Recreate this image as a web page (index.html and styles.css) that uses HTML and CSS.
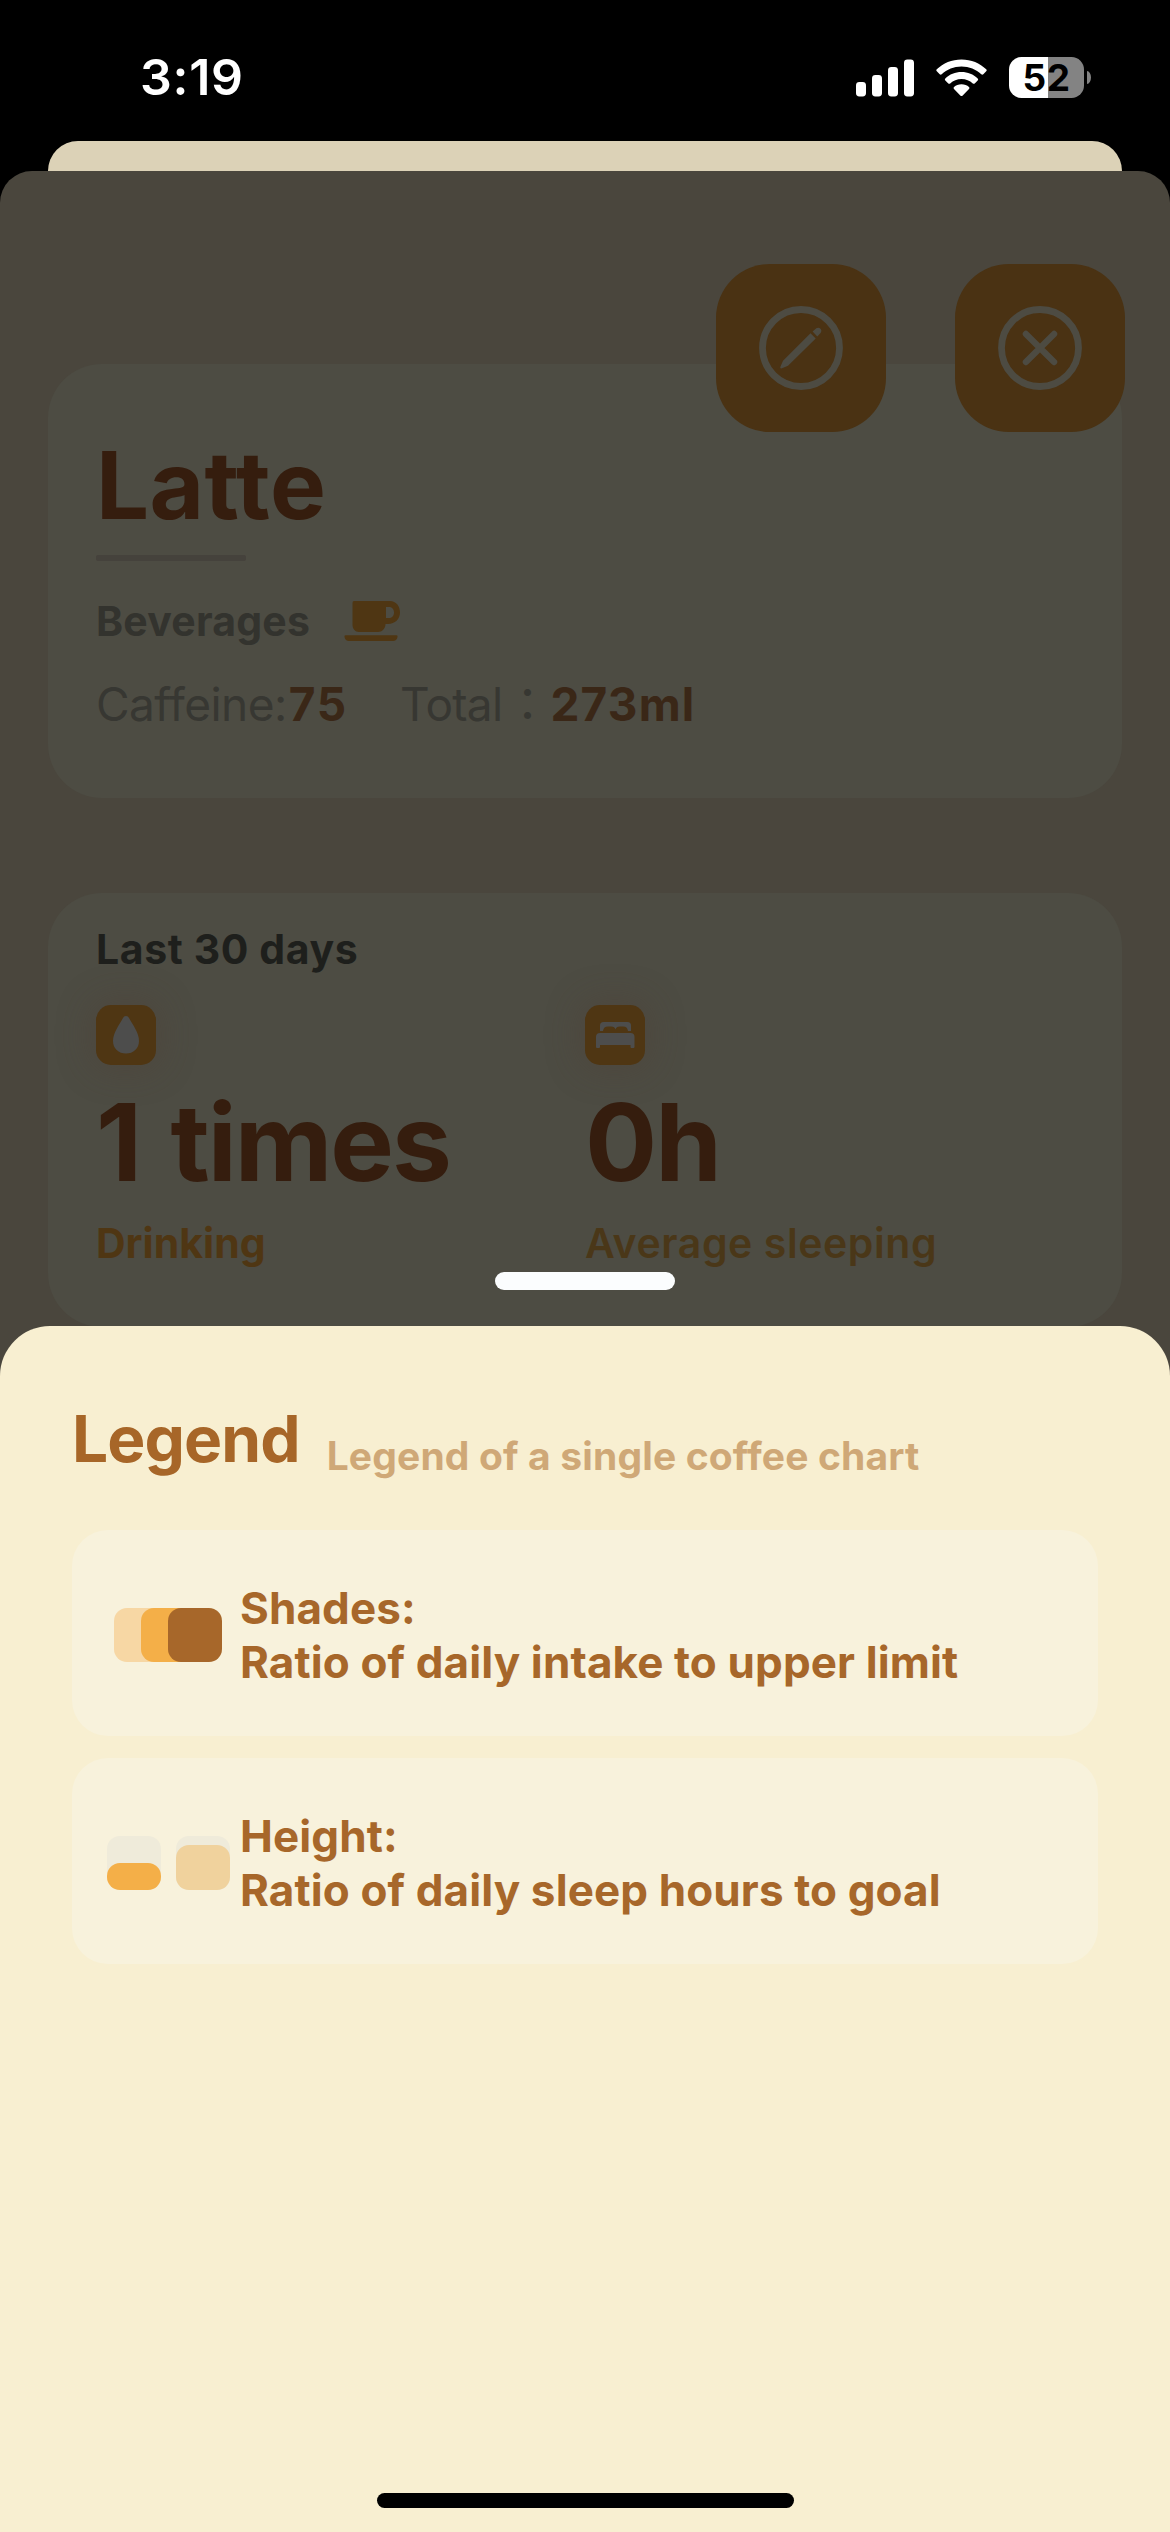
FILE: index.html
```html
<!DOCTYPE html>
<html lang="en">
<head>
  <meta charset="utf-8">
  <title>Latte – Legend</title>
  <link rel="stylesheet" href="styles.css">
</head>
<body>
  <div class="phone">
    <header class="status-bar">
      <span class="time">3:19</span>
      <div class="indicators">
        <svg class="signal" width="58" height="38" viewBox="0 0 58 38" fill="#fff">
          <rect x="0" y="23" width="10" height="14.5" rx="3.4"/>
          <rect x="16" y="16" width="10" height="21.5" rx="3.4"/>
          <rect x="32" y="8" width="10" height="29.5" rx="3.4"/>
          <rect x="48" y="0.5" width="10" height="37" rx="3.4"/>
        </svg>
        <svg class="wifi" width="51" height="38" viewBox="0 0 51 38" fill="#fff">
          <path d="M25.5 .4C35.200 .4 43.900 4.100 50.200 10.200Q51.200 11.200 50.200 12.200L47.300 15.200Q46.300 16.100 45.300 15.200C40.100 10.400 33.200 7.500 25.500 7.500S10.900 10.400 5.700 15.200Q4.700 16.100 3.700 15.200L.800 12.200Q-.2 11.200 .8 10.200C7.100 4.100 15.800 .4 25.500 .4Z"/>
          <path d="M25.500 13C31.800 13 37.400 15.400 41.700 19.400Q42.700 20.400 41.700 21.400L38.700 24.400Q37.800 25.300 36.800 24.400C33.800 21.700 29.900 20.100 25.500 20.100S17.200 21.700 14.200 24.400Q13.200 25.300 12.300 24.400L9.300 21.400Q8.300 20.400 9.300 19.400C13.600 15.400 19.200 13 25.500 13Z"/>
          <path d="M25.500 25.300C28.500 25.300 31 26.300 33 28Q34 29 33 30L26.700 36.500Q25.500 37.600 24.300 36.500L18 30Q17 29 18 28C20 26.300 22.500 25.300 25.500 25.300Z"/>
        </svg>
        <div class="battery">
          <div class="battery-body">52</div>
          <div class="battery-tip"></div>
        </div>
      </div>
    </header>

    <div class="stacked-sheet"></div>

    <main class="detail">
      <section class="card">
        <h1 class="drink-name">Latte</h1>
        <div class="divider"></div>
        <div class="category">
          <span>Beverages</span>
          <svg width="56" height="40" viewBox="0 0 56 40" fill="#4f3613">
            <path fill-rule="evenodd" d="M10 0H46C52 0 56 5 56 11.500S51 23 44 23H41.500C41.500 27.500 38 31 34 31H15C11 31 8.500 27.500 8.500 24V2Q8.500 0 10 0ZM42 6V17H44.500C48 17 50 15 50 11.500S48 6 44.500 6Z"/>
            <path d="M1.500 34.300H52.500Q54 34.300 53.500 36C53 38.500 51.500 40 49 40H5C2.500 40 1 38.500 .5 36Q0 34.300 1.500 34.300Z"/>
          </svg>
        </div>
        <div class="amounts">
          <span class="amount-label caffeine-label">Caffeine:</span><b class="amount-value caffeine">75</b>
          <span class="amount-label total">Total</span><span class="amount-label colon">：</span><b class="amount-value volume">273ml</b>
        </div>
      </section>

      <section class="card stats">
        <h2 class="stats-title">Last 30 days</h2>
        <div class="stats-grid">
          <div class="stat">
            <div class="stat-icon">
              <svg width="60" height="60" viewBox="0 0 60 60" fill="#4d4d4c"><path d="M30 11C31.500 11 32.300 11.800 33 13C37 20.500 43 27.500 43 36C43 43.500 37.300 48.600 30 48.600S17 43.500 17 36C17 27.500 23 20.500 27 13C27.700 11.800 28.500 11 30 11Z"/></svg>
            </div>
            <div class="stat-value times">1 times</div>
            <div class="stat-label">Drinking</div>
          </div>
          <div class="stat">
            <div class="stat-icon">
              <svg width="60" height="60" viewBox="0 0 60 60" fill="#4d4d4c">
                <path d="M18.500 17H42.500Q46 17 46 20.500V26H43C42.500 22.700 41 21.500 38 21.500H35C32.300 21.500 31 22.500 30.500 24.500C30 22.500 28.700 21.500 26 21.500H23C20 21.500 18.500 22.700 18 26H15V20.500Q15 17 18.500 17Z"/>
                <path d="M15 28H45.500Q49.500 28 49.500 32V42Q49.500 43 48.500 43H46.500Q45.500 43 45.500 42V40H15V42Q15 43 14 43H12Q11 43 11 42V32Q11 28 15 28Z"/>
              </svg>
            </div>
            <div class="stat-value hours">0h</div>
            <div class="stat-label average">Average sleeping</div>
          </div>
        </div>
      </section>

      <nav class="actions">
        <button class="action" aria-label="Edit">
          <svg width="84" height="84" viewBox="0 0 84 84" fill="none" stroke="#4d4b42">
            <circle cx="42" cy="42" r="38.500" stroke-width="6.800"/>
            <path fill="#4d4b42" stroke="none" d="M51.500 27.300L56.700 32.500L29 59.800L23 62.300Q20.500 63 21.500 60.500L24 54.700ZM53.600 25.500L57.300 22.300Q59.500 20.800 61.800 23Q63.200 25 61.600 27L58.300 30.400Z"/>
          </svg>
        </button>
        <button class="action" aria-label="Close">
          <svg width="84" height="84" viewBox="0 0 84 84" fill="none" stroke="#4d4b42" stroke-linecap="round">
            <circle cx="42" cy="42" r="38.500" stroke-width="6.800"/>
            <path stroke-width="6.300" d="M27.900 27.900L56.100 56.100M56.100 27.900L27.900 56.100"/>
          </svg>
        </button>
      </nav>
    </main>

    <section class="legend-sheet">
      <div class="grabber"></div>
      <header class="legend-header">
        <h2 class="legend-title">Legend</h2>
        <p class="legend-subtitle">Legend of a single coffee chart</p>
      </header>
      <div class="legend-list">
        <article class="legend-item">
          <div class="swatches overlapping">
            <i class="swatch light"></i><i class="swatch medium"></i><i class="swatch dark"></i>
          </div>
          <p class="legend-text">Shades:<br>Ratio of daily intake to upper limit</p>
        </article>
        <article class="legend-item">
          <div class="swatches levels">
            <i class="level"><i class="fill half"></i></i>
            <i class="level"><i class="fill most"></i></i>
          </div>
          <p class="legend-text">Height:<br>Ratio of daily sleep hours to goal</p>
        </article>
      </div>
      <div class="home-indicator"></div>
    </section>
  </div>
</body>
</html>
```
FILE: styles.css
```css
* { box-sizing: border-box; margin: 0; padding: 0; }

body {
  background: #000;
  font-family: Inter, "Liberation Sans", sans-serif;
}

svg { display: block; flex: none; }

.phone {
  position: relative;
  display: flex;
  flex-direction: column;
  width: 1170px;
  height: 2532px;
  background: #000;
  overflow: hidden;
}

/* Status bar */
.status-bar {
  display: flex;
  justify-content: space-between;
  align-items: flex-start;
  height: 141px;
  padding: 47px 79px 0 140px;
  color: #fff;
}
.time { font-size: 50px; font-weight: 600; line-height: 61px; letter-spacing: .7px; }
.indicators { display: flex; align-items: center; height: 61px; }
.signal { margin-right: 22px; }
.wifi { margin-right: 22px; }
.battery { display: flex; align-items: center; gap: 3px; }
.battery-body {
  width: 75px;
  height: 41px;
  border-radius: 12.500px;
  background: linear-gradient(90deg, #fff 39px, #838383 39px);
  color: #000;
  font-size: 37px;
  font-weight: 700;
  line-height: 41px;
  letter-spacing: .5px;
  text-align: center;
}
.battery-tip { width: 4px; height: 13px; border-radius: 0 4px 4px 0 / 0 6.500px 6.500px 0; background: #838383; }

/* Sheet peeking out behind the detail screen */
.stacked-sheet {
  height: 30px;
  margin: 0 48px;
  border-radius: 30px 30px 0 0;
  background: #dcd2b7;
}

/* Dimmed detail screen */
.detail {
  position: relative;
  flex: 1;
  padding: 193px 48px 0;
  border-radius: 32px 32px 0 0;
  background: #4a463d;
}
.card {
  height: 434px;
  padding: 71px 48px 0;
  border-radius: 54px;
  background: #4d4c43;
}
.drink-name { font-size: 94px; font-weight: 700; line-height: 100px; letter-spacing: .4px; color: #351d0e; }
.divider { width: 150px; height: 6px; margin-top: 20px; border-radius: 2px; background: #45423c; }
.category {
  display: flex;
  align-items: center;
  gap: 34px;
  height: 50px;
  margin-top: 35px;
  font-size: 41px;
  font-weight: 700;
  line-height: 50px;
  letter-spacing: .2px;
  color: #33332e;
}
.amounts { display: flex; align-items: baseline; margin-top: 33px; font-size: 46px; line-height: 50px; }
.amount-label { font-weight: 400; color: #373732; }
.caffeine-label { letter-spacing: -.54px; }
.amount-value { font-weight: 700; color: #3a2717; }
.caffeine { margin-left: 2px; letter-spacing: 1.800px; }
.total { margin-left: 52px; letter-spacing: -.7px; }
.colon { width: 46px; margin-left: 2px; font-family: "Noto Sans CJK JP", sans-serif; line-height: 44px; }
.volume { letter-spacing: 1.200px; }

.stats { margin-top: 95px; padding-top: 31px; }
.stats-title { font-size: 41px; font-weight: 700; line-height: 50px; letter-spacing: .6px; color: #1e1f1c; }
.stats-grid { display: grid; grid-template-columns: 489px 1fr; margin-top: 31px; }
.stat-icon {
  width: 60px;
  height: 60px;
  border-radius: 15px;
  background: #4f3613;
  box-shadow: 0 0 36px 2px rgba(80, 62, 50, .45);
}
.stat-value { margin-top: 22px; font-size: 107px; font-weight: 700; line-height: 110px; color: #351d0e; }
.times { letter-spacing: -2px; word-spacing: 7px; }
.hours { letter-spacing: -2px; }
.stat-label { margin-top: 21px; font-size: 41px; font-weight: 700; line-height: 50px; color: #4f3613; }
.average { font-weight: 600; letter-spacing: .57px; color: #4a3718; }

/* Floating buttons over the first card */
.actions { position: absolute; top: 93px; right: 45px; display: flex; gap: 69px; }
.action {
  display: grid;
  place-items: center;
  width: 170px;
  height: 168px;
  border: 0;
  border-radius: 54px;
  background: #4a3213;
}

/* Legend sheet */
.legend-sheet {
  position: absolute;
  left: 0;
  right: 0;
  bottom: 0;
  display: flex;
  flex-direction: column;
  height: 1206px;
  padding: 73px 72px 24px;
  border-radius: 50px 50px 0 0;
  background: #f8efd1;
}
.grabber {
  position: absolute;
  top: -54px;
  left: 495px;
  width: 180px;
  height: 18px;
  border-radius: 9px;
  background: #fbfdfe;
}
.legend-header { display: flex; align-items: flex-end; gap: 27px; }
.legend-title { font-size: 64px; font-weight: 700; line-height: 80px; letter-spacing: -.9px; color: #a76628; }
.legend-subtitle { font-size: 39px; font-weight: 700; line-height: 46px; letter-spacing: .15px; color: #cfa877; }
.legend-list { display: grid; gap: 22px; margin-top: 51px; }
.legend-item {
  display: flex;
  align-items: center;
  gap: 9px;
  height: 206px;
  padding: 4px 33px 0;
  border-radius: 36px;
  background: #f8f2dc;
}
.swatches { display: flex; justify-content: center; width: 126px; }
.swatch { width: 54px; height: 54px; border-radius: 13px; }
.swatch + .swatch { margin-left: -27px; }
.light { background: #f7d7a4; }
.medium { background: #f4af48; }
.dark { background: #a7672a; }
.levels { gap: 15px; }
.level { display: flex; align-items: flex-end; width: 54px; height: 54px; border-radius: 13px; background: #efebda; }
.fill { width: 100%; border-radius: 13px; }
.half { height: 27px; background: #f4af48; }
.most { height: 45px; background: #f0d29d; }
.legend-text { font-size: 44px; font-weight: 700; line-height: 54px; letter-spacing: .12px; white-space: nowrap; color: #a7672a; }
.home-indicator { align-self: center; width: 417px; height: 15px; margin-top: auto; border-radius: 8px; background: #000; }
```
